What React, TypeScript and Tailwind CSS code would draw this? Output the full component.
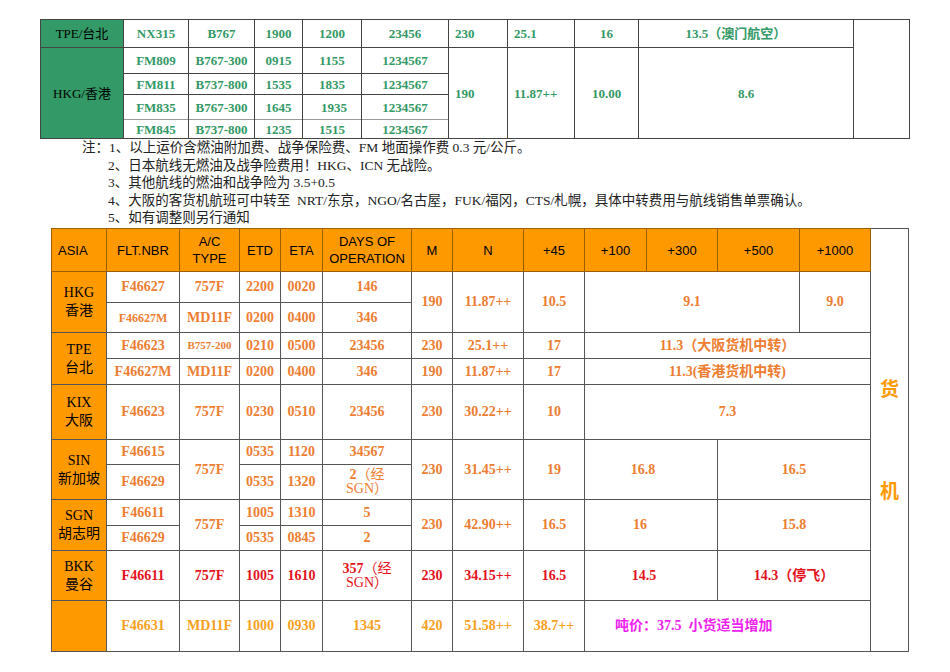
import React from "react";

const serif = "font-['Liberation_Serif','Noto_Sans_CJK_SC',serif]";
const sans = "font-['Liberation_Sans','Noto_Sans_CJK_SC',sans-serif]";

function TopTable() {
  const g = "border border-[#444] text-center align-middle p-0 leading-none";
  const tdL = "border border-[#444] text-left pl-[6px] align-middle p-0 leading-none";
  const first = "border border-[#444] bg-[#339966] text-black font-normal text-center align-middle p-0 leading-none";
  const inner = "border-x border-x-[#444] border-t border-t-[#999] text-center align-middle p-0 leading-none";
  return (
    <table className={`ml-[40px] mt-[19px] border-collapse table-fixed w-[869px] text-[13px] font-bold text-[#339966] ${serif}`}>
      <colgroup>
        <col className="w-[83px]" />
        <col className="w-[65px]" />
        <col className="w-[66px]" />
        <col className="w-[48px]" />
        <col className="w-[59px]" />
        <col className="w-[87px]" />
        <col className="w-[59px]" />
        <col className="w-[67px]" />
        <col className="w-[64px]" />
        <col className="w-[215px]" />
        <col className="w-[56px]" />
      </colgroup>
      <tbody>
        <tr className="h-[28px]">
          <td className={first}>TPE/台北</td>
          <td className={g}>NX315</td>
          <td className={g}>B767</td>
          <td className={g}>1900</td>
          <td className={g}>1200</td>
          <td className={g}>23456</td>
          <td className={tdL}>230</td>
          <td className={tdL}>25.1</td>
          <td className={g}>16</td>
          <td className={`${g} pr-[20px]`}>13.5（澳门航空）</td>
          <td className={g} rowSpan={5}></td>
        </tr>
        <tr className="h-[26px]">
          <td className={first} rowSpan={4}>HKG/香港</td>
          <td className={g}>FM809</td>
          <td className={g}>B767-300</td>
          <td className={g}>0915</td>
          <td className={g}>1155</td>
          <td className={g}>1234567</td>
          <td className={tdL} rowSpan={4}>190</td>
          <td className={tdL} rowSpan={4}>11.87++</td>
          <td className={g} rowSpan={4}>10.00</td>
          <td className={g} rowSpan={4}>8.6</td>
        </tr>
        <tr className="h-[21px]">
          <td className={g}>FM811</td>
          <td className={g}>B737-800</td>
          <td className={g}>1535</td>
          <td className={g}>1835</td>
          <td className={g}>1234567</td>
        </tr>
        <tr className="h-[25px]">
          <td className={inner}>FM835</td>
          <td className={inner}>B767-300</td>
          <td className={inner}>1645</td>
          <td className={`${inner} pl-[4px]`}>1935</td>
          <td className={inner}>1234567</td>
        </tr>
        <tr className="h-[19px]">
          <td className={`${inner} border-b border-b-[#444]`}>FM845</td>
          <td className={`${inner} border-b border-b-[#444]`}>B737-800</td>
          <td className={`${inner} border-b border-b-[#444]`}>1235</td>
          <td className={`${inner} border-b border-b-[#444]`}>1515</td>
          <td className={`${inner} border-b border-b-[#444]`}>1234567</td>
        </tr>
      </tbody>
    </table>
  );
}

function Notes() {
  return (
    <div className={`h-[89px] text-[13.5px] leading-[17.6px] text-[#222] ${serif}`}>
      <div className="pl-[82px]">注：1、以上运价含燃油附加费、战争保险费、FM 地面操作费 0.3 元/公斤。</div>
      <div className="pl-[108px]">2、日本航线无燃油及战争险费用！HKG、ICN 无战险。</div>
      <div className="pl-[108px]">3、其他航线的燃油和战争险为 3.5+0.5</div>
      <div className="pl-[108px]">4、大阪的客货机航班可中转至&nbsp; NRT/东京，NGO/名古屋，FUK/福冈，CTS/札幌，具体中转费用与航线销售单票确认。</div>
      <div className="pl-[108px]">5、如有调整则另行通知</div>
    </div>
  );
}

function BottomTable() {
  const h = `border border-[#9a6000] bg-[#ff9900] text-black font-normal text-[13px] leading-[17px] text-center align-middle p-0 ${sans}`;
  const a = "border border-[#555] bg-[#ff9900] text-black font-normal text-[14px] leading-[18px] text-center align-middle p-0";
  const c = "border border-[#555] text-center align-middle p-0 leading-none";
  const cg = "border border-x-[#555] border-y-[#555] border-t-[#999] text-center align-middle p-0 leading-none";
  return (
    <table className={`ml-[51px] border-collapse table-fixed w-[857px] text-[14px] font-bold ${serif}`}>
      <colgroup>
        <col className="w-[55px]" />
        <col className="w-[73px]" />
        <col className="w-[60px]" />
        <col className="w-[41px]" />
        <col className="w-[42px]" />
        <col className="w-[89px]" />
        <col className="w-[41px]" />
        <col className="w-[71px]" />
        <col className="w-[61px]" />
        <col className="w-[62px]" />
        <col className="w-[71px]" />
        <col className="w-[82px]" />
        <col className="w-[71px]" />
        <col className="w-[38px]" />
      </colgroup>
      <tbody>
        <tr className="h-[43px]">
          <td className={`${h} text-left pl-[6px]`}>ASIA</td>
          <td className={h}>FLT.NBR</td>
          <td className={h}>A/C<br />TYPE</td>
          <td className={h}>ETD</td>
          <td className={h}>ETA</td>
          <td className={h}>DAYS OF<br />OPERATION</td>
          <td className={h}>M</td>
          <td className={h}>N</td>
          <td className={h}>+45</td>
          <td className={h}>+100</td>
          <td className={h}>+300</td>
          <td className={h}>+500</td>
          <td className={h}>+1000</td>
          <td className="border border-[#555] bg-white align-middle p-0" rowSpan={12}>
            <div className="flex flex-col items-center gap-[82px] pb-[3px] text-[19px] leading-[20px] font-bold text-[#ff9900] font-['Noto_Sans_CJK_SC',sans-serif]">
              <span>货</span>
              <span>机</span>
            </div>
          </td>
        </tr>

        {/* HKG */}
        <tr className="h-[31px] text-[#ed7d31]">
          <td className={a} rowSpan={2}>HKG<br />香港</td>
          <td className={c}>F46627</td>
          <td className={c}>757F</td>
          <td className={c}>2200</td>
          <td className={c}>0020</td>
          <td className={c}>146</td>
          <td className={c} rowSpan={2}>190</td>
          <td className={c} rowSpan={2}>11.87++</td>
          <td className={c} rowSpan={2}>10.5</td>
          <td className={c} colSpan={3} rowSpan={2}>9.1</td>
          <td className={c} rowSpan={2}>9.0</td>
        </tr>
        <tr className="h-[30px] text-[#ed7d31]">
          <td className={`${cg} text-[12px]`}>F46627M</td>
          <td className={cg}>MD11F</td>
          <td className={cg}>0200</td>
          <td className={cg}>0400</td>
          <td className={cg}>346</td>
        </tr>

        {/* TPE */}
        <tr className="h-[26px] text-[#ed7d31]">
          <td className={a} rowSpan={2}>TPE<br />台北</td>
          <td className={c}>F46623</td>
          <td className={`${c} text-[11px]`}>B757-200</td>
          <td className={c}>0210</td>
          <td className={c}>0500</td>
          <td className={c}>23456</td>
          <td className={c}>230</td>
          <td className={c}>25.1++</td>
          <td className={c}>17</td>
          <td className={c} colSpan={4}>11.3（大阪货机中转）</td>
        </tr>
        <tr className="h-[26px] text-[#ed7d31]">
          <td className={c}>F46627M</td>
          <td className={c}>MD11F</td>
          <td className={c}>0200</td>
          <td className={c}>0400</td>
          <td className={c}>346</td>
          <td className={c}>190</td>
          <td className={c}>11.87++</td>
          <td className={c}>17</td>
          <td className={c} colSpan={4}>11.3(香港货机中转)</td>
        </tr>

        {/* KIX */}
        <tr className="h-[55px] text-[#ed7d31]">
          <td className={a}>KIX<br />大阪</td>
          <td className={c}>F46623</td>
          <td className={c}>757F</td>
          <td className={c}>0230</td>
          <td className={c}>0510</td>
          <td className={c}>23456</td>
          <td className={c}>230</td>
          <td className={c}>30.22++</td>
          <td className={c}>10</td>
          <td className={c} colSpan={4}>7.3</td>
        </tr>

        {/* SIN */}
        <tr className="h-[25px] text-[#ed7d31]">
          <td className={a} rowSpan={2}>SIN<br />新加坡</td>
          <td className={c}>F46615</td>
          <td className={c} rowSpan={2}>757F</td>
          <td className={c}>0535</td>
          <td className={c}>1120</td>
          <td className={c}>34567</td>
          <td className={c} rowSpan={2}>230</td>
          <td className={c} rowSpan={2}>31.45++</td>
          <td className={c} rowSpan={2}>19</td>
          <td className={`${c} pr-[16px]`} colSpan={2} rowSpan={2}>16.8</td>
          <td className={c} colSpan={2} rowSpan={2}>16.5</td>
        </tr>
        <tr className="h-[35px] text-[#ed7d31]">
          <td className={cg}>F46629</td>
          <td className={cg}>0535</td>
          <td className={cg}>1320</td>
          <td className={`${cg} leading-[18px]`}>
            2<span className="font-normal">（经</span>
            <br />
            <span className="font-normal">SGN）</span>
          </td>
        </tr>

        {/* SGN */}
        <tr className="h-[26px] text-[#ed7d31]">
          <td className={a} rowSpan={2}>SGN<br />胡志明</td>
          <td className={c}>F46611</td>
          <td className={c} rowSpan={2}>757F</td>
          <td className={c}>1005</td>
          <td className={c}>1310</td>
          <td className={c}>5</td>
          <td className={c} rowSpan={2}>230</td>
          <td className={c} rowSpan={2}>42.90++</td>
          <td className={c} rowSpan={2}>16.5</td>
          <td className={`${c} pr-[22px]`} colSpan={2} rowSpan={2}>16</td>
          <td className={c} colSpan={2} rowSpan={2}>15.8</td>
        </tr>
        <tr className="h-[25px] text-[#ed7d31]">
          <td className={cg}>F46629</td>
          <td className={cg}>0535</td>
          <td className={cg}>0845</td>
          <td className={cg}>2</td>
        </tr>

        {/* BKK */}
        <tr className="h-[50px] text-[#e3121c]">
          <td className={a}>BKK<br />曼谷</td>
          <td className={c}>F46611</td>
          <td className={c}>757F</td>
          <td className={c}>1005</td>
          <td className={c}>1610</td>
          <td className={`${c} leading-[19px]`}>
            357<span className="font-normal">（经</span>
            <br />
            <span className="font-normal">SGN）</span>
          </td>
          <td className={c}>230</td>
          <td className={c}>34.15++</td>
          <td className={c}>16.5</td>
          <td className={`${c} pr-[14px]`} colSpan={2}>14.5</td>
          <td className={c} colSpan={2}>14.3（停飞）</td>
        </tr>

        {/* last */}
        <tr className="h-[51px] text-[#f7a020]">
          <td className={a}></td>
          <td className={c}>F46631</td>
          <td className={c}>MD11F</td>
          <td className={c}>1000</td>
          <td className={c}>0930</td>
          <td className={c}>1345</td>
          <td className={c}>420</td>
          <td className={c}>51.58++</td>
          <td className={c}>38.7++</td>
          <td className={`${c} text-left pl-[30px] text-[#ee22ee]`} colSpan={4}>吨价：37.5&nbsp;&nbsp;小货适当增加</td>
        </tr>
      </tbody>
    </table>
  );
}

export default function App() {
  return (
    <div className="w-[950px] h-[672px] bg-white overflow-hidden">
      <TopTable />
      <Notes />
      <BottomTable />
    </div>
  );
}
